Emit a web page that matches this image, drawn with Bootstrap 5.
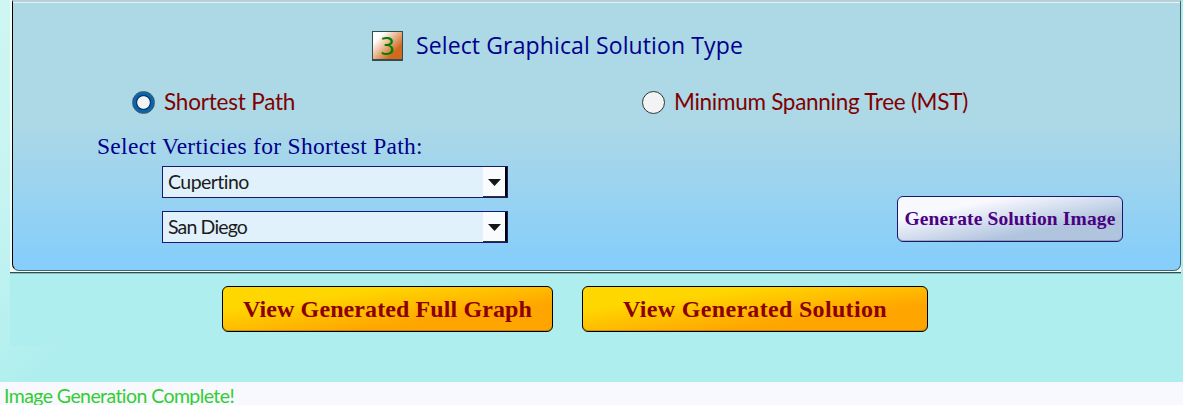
<!DOCTYPE html>
<html lang="en">
<head>
<meta charset="utf-8">
<meta name="viewport" content="width=device-width, initial-scale=1">
<title>Graph Solution</title>
<link href="https://cdn.jsdelivr.net/npm/bootstrap@5.3.0/dist/css/bootstrap.min.css" rel="stylesheet">
<style>
body { height: 405px; overflow: hidden; font-family: Lato, sans-serif; font-variant-ligatures: none; background: #afeeee linear-gradient(135deg, #cff6f2 0, #c6f4f1 140px, #afeeee 290px); }
.page-area { height: 382px; padding: 0 2px 0 10px; }
.panel-wrap { height: 273px; padding: 0 0 1px 2px; background: #f2fbf5; border-bottom: 1px solid #2f4f4f; }
.solution-panel { height: 271px; border: 1px solid #3a6870; border-left-color: #000; border-top: 2px solid #b7cfd7; border-radius: 0 0 7px 7px; background: linear-gradient(#add8e6 45%, #87cefa 96%); box-shadow: inset 0 1px #e5f2f6; }
.step-row { height: 59px; padding: 29px 0 0 359px; gap: 13px; }
.step-no { width: 31px; height: 30px; font: 24px/30px "DejaVu Sans", sans-serif; color: #008000; border: 1px solid #2f4f4f; border-bottom-width: 2px; background: linear-gradient(135deg, #fff 20%, #d2691e 75%); }
.step-title { font: 23px/28px "Open Sans", sans-serif; letter-spacing: .12px; color: #00008b; white-space: nowrap; }
.choice-row { height: 55px; padding: 27px 0 0 119px; }
.choice { width: 510px; height: 28px; gap: 9px; color: #800000; font-size: 22.5px; line-height: 26px; letter-spacing: -.2px; white-space: nowrap; }
.choice + .choice { letter-spacing: -.28px; }
.choice input { appearance: none; width: 23px; height: 23px; margin: 0; border: 1.5px solid #2b3338; border-radius: 50%; background: #f3f3f3; }
.choice input:checked { border-color: #3f5a68; background: radial-gradient(circle, #f3f3f3 0 5.8px, #063b68 6.7px 7.2px, #0b64ad 8px) border-box; }
.vertex-title { height: 50px; padding: 14px 0 0 84px; font: 23.5px/32px "Liberation Serif", serif; letter-spacing: .3px; color: #00008b; }
.pick-list { padding-left: 149px; gap: 13px; }
.pick { width: 346px; height: 32px; border: 1px solid #191970; border-bottom-width: 1.5px; background: #e0f1fb; color: #1b1b1b; font-size: 19.5px; letter-spacing: -.55px; line-height: 30px; padding-left: 5px; }
.pick + .pick { letter-spacing: -.85px; }
.pick-arrow { width: 24px; height: 30px; background: #f8fcff; border-right: 2px solid #000; border-bottom: 1px solid #333; }
.action-btn { --bs-btn-padding-x: 0; --bs-btn-padding-y: 0; height: 46px; border: 1px solid #000; border-radius: 6px; box-shadow: inset 0 -1px #0003; font-family: "Liberation Serif", serif; font-weight: bold; white-space: nowrap; }
.generate-btn { width: 226px; margin: 30px 57px 0 0; border-color: #191970; color: #4b0082; font-size: 19.5px; letter-spacing: .13px; background: linear-gradient(to bottom right, #f8f8ff 25%, #b0c4de 70%); }
.view-row { padding: 12px 0 0 212px; gap: 29px; }
.view-btn { font-size: 24px; letter-spacing: .1px; color: #8b0000; background: linear-gradient(to bottom right, #ffd700 25%, #ffa500 70%); }
.view-btn + .view-btn { letter-spacing: .32px; }
.view-area { height: 73px; background: #afeeee; border-top: 1px solid #8bbbbc; }
.status { height: 23px; background: #f8f8ff; color: #32cd32; font-size: 19.5px; letter-spacing: -.58px; line-height: 27px; padding-left: 4px; white-space: nowrap; }
</style>
</head>
<body>
<main class="page-area">
  <div class="panel-wrap">
    <section class="solution-panel">
      <div class="step-row d-flex"><span class="step-no text-center">3</span><span class="step-title">Select Graphical Solution Type</span></div>
      <div class="choice-row d-flex">
        <label class="choice d-flex align-items-center"><input type="radio" name="type" checked><span>Shortest Path</span></label>
        <label class="choice d-flex align-items-center"><input type="radio" name="type"><span>Minimum Spanning Tree (MST)</span></label>
      </div>
      <div class="vertex-title">Select Verticies for Shortest Path:</div>
      <div class="d-flex justify-content-between align-items-start">
        <div class="pick-list d-flex flex-column">
          <div class="pick d-flex justify-content-between"><span>Cupertino</span><span class="pick-arrow"><svg class="d-block" width="22" height="29"><path d="M5 12H18L11.5 19Z" fill="#151515"/></svg></span></div>
          <div class="pick d-flex justify-content-between"><span>San Diego</span><span class="pick-arrow"><svg class="d-block" width="22" height="29"><path d="M5 12H18L11.5 19Z" fill="#151515"/></svg></span></div>
        </div>
        <button class="btn action-btn generate-btn" type="button">Generate Solution Image</button>
      </div>
    </section>
  </div>
  <div class="view-area">
    <div class="view-row d-flex">
      <button class="btn action-btn view-btn" style="width:331px" type="button">View Generated Full Graph</button>
      <button class="btn action-btn view-btn" style="width:346px" type="button">View Generated Solution</button>
    </div>
  </div>
</main>
<footer class="status">Image Generation Complete!</footer>
<script src="https://cdn.jsdelivr.net/npm/bootstrap@5.3.0/dist/js/bootstrap.bundle.min.js"></script>
</body>
</html>
